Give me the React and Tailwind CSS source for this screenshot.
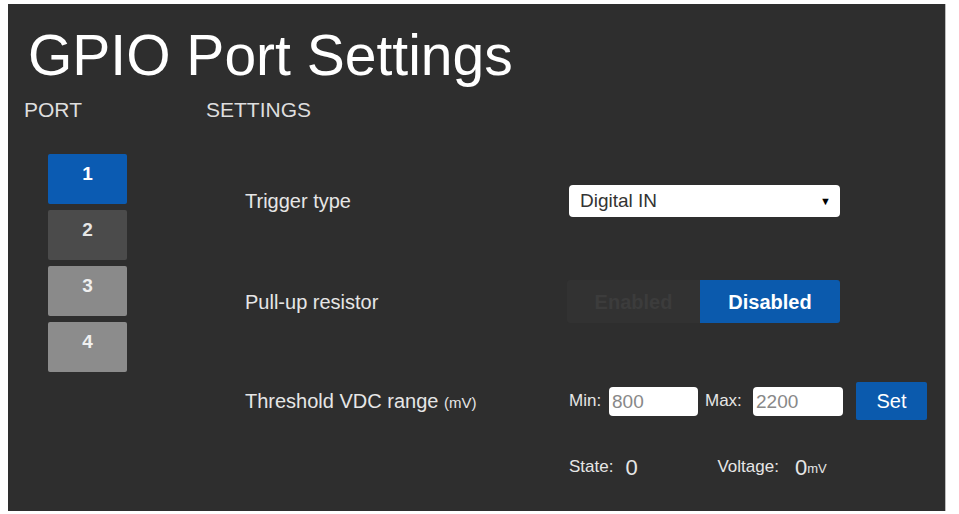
export default function App() {
  const ports = [
    { n: "1", cls: "bg-[#0b5bb2] text-white" },
    { n: "2", cls: "bg-[#4b4b4b] text-[#e6e6e6]" },
    { n: "3", cls: "bg-[#8a8a8a] text-[#f0f0f0]" },
    { n: "4", cls: "bg-[#8c8c8c] text-[#f0f0f0]" },
  ];
  return (
    <div
      className="w-[959px] h-[514px] bg-white overflow-hidden"
      style={{ fontFamily: '"Liberation Sans", Arial, sans-serif' }}
    >
      <div className="ml-[8px] mt-[4px] w-[938px] h-[507px] bg-[#2e2e2e] border-r border-[#bdbdbd] pt-[23px] pl-[20px]">
        <h1 className="text-[57px] leading-[57px] text-white font-normal">GPIO Port Settings</h1>
        <div className="flex mt-[15px] -ml-[4px] text-[21px] leading-[21px] text-[#dedede]">
          <div className="w-[182px]">PORT</div>
          <div>SETTINGS</div>
        </div>
        <div className="flex mt-[34px] ml-[20px]">
          <div className="flex flex-col gap-[6px] w-[79px]">
            {ports.map((p) => (
              <div
                key={p.n}
                className={`h-[50px] rounded-[2px] text-center font-bold text-[19px] leading-[22px] pt-[9px] ${p.cls}`}
              >
                {p.n}
              </div>
            ))}
          </div>
          <div className="ml-[118px] mt-[31px] flex flex-col text-[#e6e6e6]">
            <div className="flex items-center h-[32px]">
              <div className="w-[324px] text-[20px]">Trigger type</div>
              <div className="w-[271px] h-[32px] bg-white rounded-[4px] flex items-center justify-between pl-[11px] pr-[9px] text-[#333] text-[19px]">
                <span>Digital IN</span>
                <span className="text-[11px] text-black">▼</span>
              </div>
            </div>
            <div className="flex items-center h-[43px] mt-[63px]">
              <div className="w-[322px] text-[20px]">Pull-up resistor</div>
              <div className="flex h-[43px] w-[273px] rounded-[3px] overflow-hidden">
                <div className="w-[133px] bg-[#323232] text-[#3c3c3c] font-bold text-[20px] flex items-center justify-center">
                  Enabled
                </div>
                <div className="flex-1 bg-[#0b5aad] text-white font-bold text-[20px] flex items-center justify-center">
                  Disabled
                </div>
              </div>
            </div>
            <div className="flex items-center h-[38px] mt-[59px]">
              <div className="w-[324px] text-[20px]">
                Threshold VDC range <span className="text-[15px]">(mV)</span>
              </div>
              <div className="flex items-center">
                <span className="text-[17px] w-[40px]">Min:</span>
                <div className="w-[89px] h-[29px] bg-white rounded-[4px] pl-[3px] text-[19px] leading-[29px] text-[#888]">800</div>
                <span className="text-[17px] ml-[7px] w-[48px]">Max:</span>
                <div className="w-[90px] h-[29px] bg-white rounded-[4px] pl-[3px] text-[19px] leading-[29px] text-[#888]">2200</div>
                <div className="ml-[13px] w-[71px] h-[38px] bg-[#0b5aad] rounded-[2px] text-white text-[20px] flex items-center justify-center">
                  Set
                </div>
              </div>
            </div>
            <div className="flex items-center h-[24px] mt-[35px] ml-[324px]">
              <span className="text-[17px]">State:</span>
              <span className="text-[22px] ml-[12px] w-[92px]">0</span>
              <span className="text-[17px]">Voltage:</span>
              <span className="text-[22px] ml-[16px]">0</span>
              <span className="text-[13px] mt-[4px]">mV</span>
            </div>
          </div>
        </div>
      </div>
    </div>
  );
}
